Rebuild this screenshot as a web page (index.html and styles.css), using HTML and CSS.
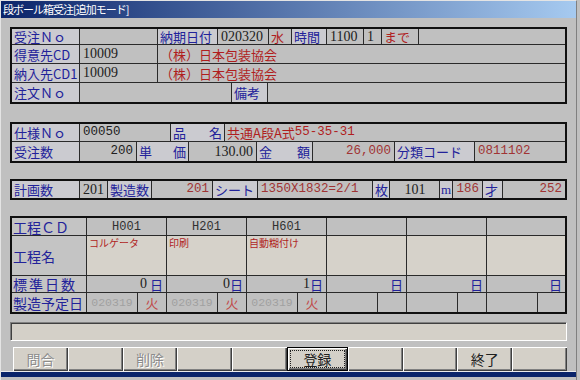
FILE: index.html
```html
<!DOCTYPE html>
<html lang="ja">

<head>
    <meta charset="UTF-8">
    <title>段ボール箱受注</title>
    <link rel="stylesheet" href="styles.css">
</head>

<body>
    <div class="window">
        <div class="titlebar">段ボール箱受注[追加モード]</div>

        <!-- 受注ヘッダ -->
        <div class="box head">
            <div class="row r-order">
                <div class="lb">受注Ｎｏ</div>
                <div></div>
                <div class="lb">納期日付</div>
                <div class="serif">020320</div>
                <div class="red">水</div>
                <div class="lb">時間</div>
                <div class="serif">1100</div>
                <div class="serif">1</div>
                <div class="red">まで</div>
                <div></div>
            </div>
            <div class="row r-customer">
                <div class="lb">得意先CD</div>
                <div class="serif">10009</div>
                <div class="red jp">（株）日本包装協会</div>
            </div>
            <div class="row r-customer">
                <div class="lb">納入先CD1</div>
                <div class="serif">10009</div>
                <div class="red jp">（株）日本包装協会</div>
            </div>
            <div class="row r-note">
                <div class="lb">注文Ｎｏ</div>
                <div></div>
                <div class="lb">備考</div>
                <div></div>
            </div>
        </div>

        <!-- 仕様 -->
        <div class="box spec">
            <div class="row r-spec">
                <div class="lb">仕様Ｎｏ</div>
                <div class="mono">00050</div>
                <div class="lb wide"><span>品</span><span>名</span></div>
                <div class="red jp">共通A段A式<span class="mono">55-35-31</span></div>
            </div>
            <div class="row r-qty">
                <div class="lb">受注数</div>
                <div class="mono right">200</div>
                <div class="lb wide"><span>単</span><span>価</span></div>
                <div class="serif right">130.00</div>
                <div class="lb wide"><span>金</span><span>額</span></div>
                <div class="mono right dred">26,000</div>
                <div class="lb">分類コード</div>
                <div class="mono dred">0811102</div>
            </div>
        </div>

        <!-- 計画 -->
        <div class="box plan">
            <div class="row r-plan">
                <div class="lb">計画数</div>
                <div class="serif right">201</div>
                <div class="lb">製造数</div>
                <div class="mono right dred">201</div>
                <div class="lb">シート</div>
                <div class="mono dred">1350X1832=2/1</div>
                <div class="lb">枚</div>
                <div class="serif center">101</div>
                <div class="lb sm">m</div>
                <div class="mono right dred">186</div>
                <div class="lb">才</div>
                <div class="mono right dred">252</div>
            </div>
        </div>

        <!-- 工程 -->
        <div class="box proc">
            <div class="row r-proc">
                <div class="tl">工程ＣＤ</div>
                <div class="code">H001</div>
                <div class="code">H201</div>
                <div class="code">H601</div>
                <div></div>
                <div></div>
                <div></div>
            </div>
            <div class="row r-proc r-name">
                <div class="tl">工程名</div>
                <div class="pname">コルゲータ</div>
                <div class="pname">印刷</div>
                <div class="pname">自動糊付け</div>
                <div class="pname"></div>
                <div class="pname"></div>
                <div class="pname"></div>
            </div>
            <div class="row r-proc r-days">
                <div class="tl spaced">標準日数</div>
                <div class="right"><span class="serif">0</span>&nbsp;<span class="unit">日</span></div>
                <div class="right"><span class="serif">0</span><span class="unit">日</span></div>
                <div class="right"><span class="serif">1</span><span class="unit">日</span></div>
                <div class="right"><span class="unit">日</span></div>
                <div class="right"><span class="unit">日</span></div>
                <div class="right"><span class="unit">日</span></div>
            </div>
            <div class="row r-date">
                <div class="tl">製造予定日</div>
                <div class="date">020319</div>
                <div class="dow">火</div>
                <div class="date">020319</div>
                <div class="dow">火</div>
                <div class="date">020319</div>
                <div class="dow">火</div>
                <div></div>
                <div></div>
                <div></div>
                <div></div>
                <div></div>
                <div></div>
            </div>
        </div>

        <!-- メッセージ欄 -->
        <div class="status"></div>

        <!-- ファンクションボタン -->
        <div class="buttons">
            <button disabled>問合</button>
            <button></button>
            <button disabled>削除</button>
            <button></button>
            <button></button>
            <button class="focus"><span>登録</span></button>
            <button></button>
            <button></button>
            <button>終了</button>
            <button></button>
        </div>

        <div class="edge"></div>
        <div class="taskbar"></div>
    </div>
</body>

</html>
```

FILE: styles.css
```css
* {
    box-sizing: border-box;
}

body {
    margin: 0;
    width: 580px;
    height: 380px;
    overflow: hidden;
    background-color: #c0c0c0;
    font-family: "Noto Sans CJK JP", sans-serif;
}

.window {
    width: 577px;
    height: 380px;
    display: flex;
    flex-direction: column;
    border-top: 1px solid #e4e4e4;
    border-left: 1px solid #e4e4e4;
    border-right: 1px solid #808080;
    background-color: #c0c0c0;
}

.titlebar {
    height: 17px;
    padding-left: 2px;
    line-height: 17px;
    font-size: 11px;
    letter-spacing: -1px;
    color: white;
    background: linear-gradient(to right, #0a246a, #a6caf0);
}

/* 枠 */
.box {
    width: 557px;
    margin-left: 9px;
    display: flex;
    flex-direction: column;
    gap: 1px;
    border: 2px solid #101010;
    background-color: #2a2a2a;
}

.head {
    margin-top: 9px;
}

.spec {
    margin-top: 18px;
}

.plan,
.proc {
    margin-top: 16px;
}

.row {
    display: grid;
    gap: 1px;
}

.row > div {
    display: flex;
    align-items: center;
    padding: 0 2px;
    white-space: nowrap;
    line-height: 1;
    font-size: 13px;
    color: #202020;
    background-color: #c0c0c0;
}

/* 行ごとの列幅 */
.r-order {
    height: 15px;
    grid-template-columns: 67px 77px 59px 50px 22px 34px 36px 17px 36px 1fr;
}

.r-customer {
    height: 18px;
    grid-template-columns: 67px 77px 1fr;
}

.r-note {
    height: 19px;
    grid-template-columns: 67px 151px 35px 1fr;
}

.r-spec {
    height: 17px;
    grid-template-columns: 67px 90px 53px 1fr;
}

.r-qty {
    height: 19px;
    grid-template-columns: 67px 56px 51px 67px 55px 81px 79px 1fr;
}

.r-plan {
    height: 17px;
    grid-template-columns: 67px 27px 43px 60px 44px 114px 16px 49px 12px 29px 19px 1fr;
}

.r-proc {
    height: 17px;
    grid-template-columns: 74px 79px 79px 79px 79px 79px 1fr;
}

.r-name {
    height: 39px;
}

.r-days {
    height: 16px;
}

.r-date {
    height: 19px;
    grid-template-columns: 74px 50px 28px 50px 28px 50px 28px 50px 28px 50px 28px 50px 1fr;
}

/* 項目名 */
.row > .lb {
    font-size: 13px;
    color: #22229a;
    background-color: #cbcbd0;
}

.row > .tl {
    padding-left: 1px;
    font-size: 14px;
    color: #22229a;
    background-color: #c4c4c4;
}

.row > .spaced {
    letter-spacing: 2px;
}

.row > .wide {
    justify-content: space-between;
}

.row > .sm {
    font-family: "Liberation Serif", serif;
    font-size: 13px;
    justify-content: center;
}

/* 値 */
.serif {
    font-family: "Liberation Serif", serif;
    font-size: 14px;
}

.row > .serif {
    font-size: 14px;
    padding-left: 3px;
}

.mono {
    font-family: "Liberation Mono", monospace;
    font-size: 12.5px;
}

.row > .mono {
    font-size: 12.5px;
    padding-left: 3px;
}

.row > .right {
    justify-content: flex-end;
    padding-right: 3px;
}

.row > .center {
    justify-content: center;
}

.row > .red {
    color: #b01e1e;
}

.row > .dred {
    color: #a03434;
}

.row > .jp {
    font-size: 13px;
}

.row > .code {
    justify-content: center;
    font-family: "Liberation Mono", monospace;
    font-size: 12px;
    color: #303030;
}

.row > .pname {
    align-items: flex-start;
    padding: 2px 2px 0;
    font-size: 10px;
    color: #b01e1e;
    background-color: #d6d2ca;
}

.unit {
    font-size: 13px;
    color: #22229a;
}

.row > .date {
    justify-content: center;
    font-family: "Liberation Mono", monospace;
    font-size: 11.5px;
    color: #a0a0a0;
}

.row > .dow {
    justify-content: center;
    font-size: 13px;
    color: #c04848;
}

/* メッセージ欄 */
.status {
    width: 557px;
    height: 19px;
    margin: 8px 0 0 9px;
    background-color: #d4d0c8;
    border-top: 1px solid #808080;
    border-left: 1px solid #808080;
    border-bottom: 1px solid white;
    border-right: 1px solid white;
    box-shadow: inset 1px 1px 0 #404040;
}

/* ボタン */
.buttons {
    width: 554px;
    height: 24px;
    margin: 6px 0 0 12px;
    display: flex;
}

.buttons button {
    flex: 1 1 0;
    min-width: 0;
    padding: 0;
    border: none;
    font-family: "Noto Sans CJK JP", sans-serif;
    font-size: 14px;
    color: #202020;
    background-color: #d4d0c8;
    box-shadow: inset 1px 1px 0 white, inset -1px -1px 0 #404040, inset -2px -2px 0 #808080;
}

.buttons button:disabled {
    color: #8c8c8c;
    text-shadow: 1px 1px 0 white;
}

.buttons .focus {
    border: 1px solid black;
    padding: 2px;
}

.buttons .focus span {
    display: flex;
    align-items: center;
    justify-content: center;
    height: 100%;
    border: 1px dotted #202020;
}

.edge {
    height: 1px;
    background-color: #ececec;
}

.taskbar {
    height: 5px;
    background-color: #0a246a;
}
```
